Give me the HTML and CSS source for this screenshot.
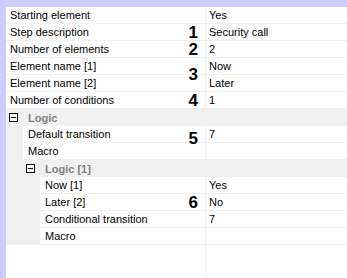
FILE: index.html
```html
<!DOCTYPE html>
<html lang="en">
<head>
    <meta charset="UTF-8">
    <title>Step properties</title>
    <link rel="stylesheet" href="styles.css">
</head>
<body>

<div class="grid">
    <div class="row"><div class="cells"><div class="name">Starting element</div><div class="value">Yes</div></div></div>
    <div class="row"><div class="cells"><div class="name">Step description</div><div class="value">Security call</div></div></div>
    <div class="row"><div class="cells"><div class="name">Number of elements</div><div class="value">2</div></div></div>
    <div class="row"><div class="cells"><div class="name">Element name [1]</div><div class="value">Now</div></div></div>
    <div class="row"><div class="cells"><div class="name">Element name [2]</div><div class="value">Later</div></div></div>
    <div class="row"><div class="cells"><div class="name">Number of conditions</div><div class="value">1</div></div></div>

    <div class="category"><span class="toggle"></span>Logic</div>
    <div class="row"><div class="indent"></div><div class="cells"><div class="name">Default transition</div><div class="value">7</div></div></div>
    <div class="row"><div class="indent"></div><div class="cells"><div class="name">Macro</div><div class="value"></div></div></div>

    <div class="category sub"><span class="indent"></span><span class="toggle"></span>Logic [1]</div>
    <div class="row"><div class="indent deep"></div><div class="cells"><div class="name">Now [1]</div><div class="value">Yes</div></div></div>
    <div class="row"><div class="indent deep"></div><div class="cells"><div class="name">Later [2]</div><div class="value">No</div></div></div>
    <div class="row"><div class="indent deep"></div><div class="cells"><div class="name">Conditional transition</div><div class="value">7</div></div></div>
    <div class="row"><div class="indent deep"></div><div class="cells"><div class="name">Macro</div><div class="value"></div></div></div>

    <div class="filler"><div class="name"></div><div class="value"></div></div>

    <!-- callout numbers -->
    <span class="mark" style="top: 19px;">1</span>
    <span class="mark" style="top: 36px;">2</span>
    <span class="mark" style="top: 61px;">3</span>
    <span class="mark" style="top: 87px;">4</span>
    <span class="mark" style="top: 125px;">5</span>
    <span class="mark" style="top: 189px;">6</span>
</div>

</body>
</html>
```

FILE: styles.css
```css
html, body {
    height: 100%;
}
body {
    margin: 0;
    background: #ccccff;
    font-family: "Liberation Sans", Arial, sans-serif;
    font-size: 11px;
    color: #000;
}
.grid {
    position: relative;
    box-sizing: border-box;
    height: calc(100% - 7px);
    margin: 7px 0 0 6px;
    background: #fff;
    display: flex;
    flex-direction: column;
}
.row {
    display: flex;
    height: 17px;
    flex: none;
}
.indent {
    width: 17px;
    background: #f0f0f0;
    flex: none;
}
.indent.deep {
    width: 34px;
}
.cells {
    display: flex;
    flex: 1;
    border-bottom: 1px solid #f0f0f0;
}
.name {
    flex: 1;
    padding-left: 4px;
    line-height: 16px;
    border-right: 1px solid #f0f0f0;
    white-space: nowrap;
}
.row .indent + .cells .name {
    padding-left: 5px;
}
.value {
    width: 138px;
    padding-left: 3px;
    line-height: 16px;
    flex: none;
}
.category {
    display: flex;
    align-items: center;
    height: 17px;
    flex: none;
    background: #f0f0f0;
    font-weight: bold;
    color: #808080;
}
.category .indent {
    width: 17px;
    align-self: stretch;
}
.toggle {
    position: relative;
    box-sizing: border-box;
    width: 9px;
    height: 9px;
    margin: 0 10px 0 3px;
    border: 1px solid #000;
    background: #fff;
    flex: none;
}
.toggle::after {
    content: "";
    position: absolute;
    left: 1px;
    top: 3px;
    width: 5px;
    height: 1px;
    background: #000;
}
.filler {
    display: flex;
    flex: 1;
}
.filler .name {
    padding: 0;
}
.mark {
    position: absolute;
    right: 149px;
    font-size: 17px;
    font-weight: bold;
    line-height: 13px;
    color: #000;
}
```
